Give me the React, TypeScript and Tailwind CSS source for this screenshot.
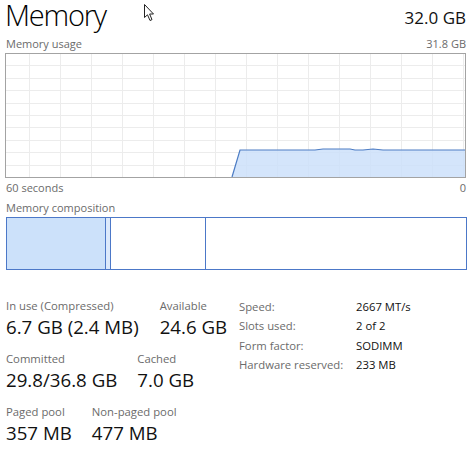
import React from "react";

const font = { fontFamily: '"Open Sans", "Noto Sans", "Liberation Sans", sans-serif' };

function UsageGraph() {
  const W = 461;
  const H = 125;
  const vlines: number[] = [];
  for (let x = 24; x < W - 2; x += 31) vlines.push(x);
  const hlines: number[] = [];
  for (let i = 1; i < 10; i++) hlines.push(Math.round(i * 12.4) + 0.5);
  const line = "227,124 235,97 310,97 318,96 345,96 350,97 358,97 368,96 378,97 460,97";
  return (
    <svg width={W} height={H} viewBox={`0 0 ${W} ${H}`} className="block">
      <rect x={0} y={0} width={W} height={H} fill="#ffffff" />
      {vlines.map((x) => (
        <line key={"v" + x} x1={x + 0.5} y1={0} x2={x + 0.5} y2={H} stroke="#ececec" strokeWidth={1} />
      ))}
      {hlines.map((y) => (
        <line key={"h" + y} x1={0} y1={y} x2={W} y2={y} stroke="#ececec" strokeWidth={1} />
      ))}
      <polygon points={line + " 460,124"} fill="#cde1fa" fillOpacity={0.85} />
      <polyline points={line} fill="none" stroke="#4c7cc4" strokeWidth={1.2} />
      <rect x={0.5} y={0.5} width={W - 1} height={H - 1} fill="none" stroke="#a3a3a3" strokeWidth={1} />
    </svg>
  );
}

function Stat({ label, value }: { label: string; value: string }) {
  return (
    <div className="flex flex-col">
      <div className="text-[11.3px] leading-[14px] text-[#6b6b6b]">{label}</div>
      <div className="text-[18.7px] leading-[22px] text-[#111] mt-[3px]">{value}</div>
    </div>
  );
}

function Cursor() {
  return (
    <svg width="12" height="18" viewBox="0 0 12 18" className="absolute left-[144px] top-[4px]">
      <path
        d="M0.5 0.5 L0.5 13.5 L3.5 10.8 L6 16.5 L8 15.6 L5.6 10 L9.5 10 Z"
        fill="#ffffff"
        stroke="#222"
        strokeWidth={1}
        strokeLinejoin="round"
      />
    </svg>
  );
}

export default function App() {
  const specs: [string, string][] = [
    ["Speed:", "2667 MT/s"],
    ["Slots used:", "2 of 2"],
    ["Form factor:", "SODIMM"],
    ["Hardware reserved:", "233 MB"],
  ];
  return (
    <div className="relative w-[474px] h-[450px] bg-white overflow-hidden" style={font}>
      <Cursor />
      <div className="pl-[5px] w-[466px]">
        <div className="flex items-start justify-between h-[35px]">
          <div className="text-[29px] leading-[30px] font-light text-black tracking-[-1.2px]">
            Memory
          </div>
          <div className="text-[17px] leading-[20px] text-[#111] mt-[8px]">32.0 GB</div>
        </div>
        <div className="flex justify-between items-end h-[15px] text-[11px] leading-[13px] text-[#6b6b6b] pl-[1px]">
          <span>Memory usage</span>
          <span>31.8 GB</span>
        </div>
        <div className="mt-[3px]">
          <UsageGraph />
        </div>
        <div className="flex justify-between h-[15px] mt-[3px] text-[11px] leading-[13px] text-[#6b6b6b] pl-[1px]">
          <span>60 seconds</span>
          <span>0</span>
        </div>
        <div className="h-[15px] mt-[5px] text-[11px] leading-[13px] text-[#6b6b6b] pl-[1px]">
          Memory composition
        </div>
        <div className="flex h-[53px] w-[461px] ml-[1px] border border-[#4c78c8] mt-[1px]">
          <div className="w-[99px] bg-[#cce1fa] border-r border-[#4c78c8]"></div>
          <div className="w-[5px] bg-[#dce9fb] border-r border-[#4c78c8]"></div>
          <div className="w-[95px] border-r border-[#4c78c8]"></div>
          <div className="flex-1"></div>
        </div>
        <div className="flex mt-[29px] pl-[1px]">
          <div className="flex flex-col gap-[14px] w-[233px]">
            <div className="flex gap-[21px]">
              <Stat label="In use (Compressed)" value="6.7 GB (2.4 MB)" />
              <Stat label="Available" value="24.6 GB" />
            </div>
            <div className="flex gap-[20px]">
              <Stat label="Committed" value="29.8/36.8 GB" />
              <Stat label="Cached" value="7.0 GB" />
            </div>
            <div className="flex gap-[20px]">
              <Stat label="Paged pool" value="357 MB" />
              <Stat label="Non-paged pool" value="477 MB" />
            </div>
          </div>
          <div className="flex flex-col text-[11.3px] leading-[19.3px] mt-[-2px]">
            {specs.map(([k, v]) => (
              <div key={k} className="flex">
                <span className="w-[117px] text-[#6b6b6b]">{k}</span>
                <span className="text-[#111]">{v}</span>
              </div>
            ))}
          </div>
        </div>
      </div>
    </div>
  );
}
